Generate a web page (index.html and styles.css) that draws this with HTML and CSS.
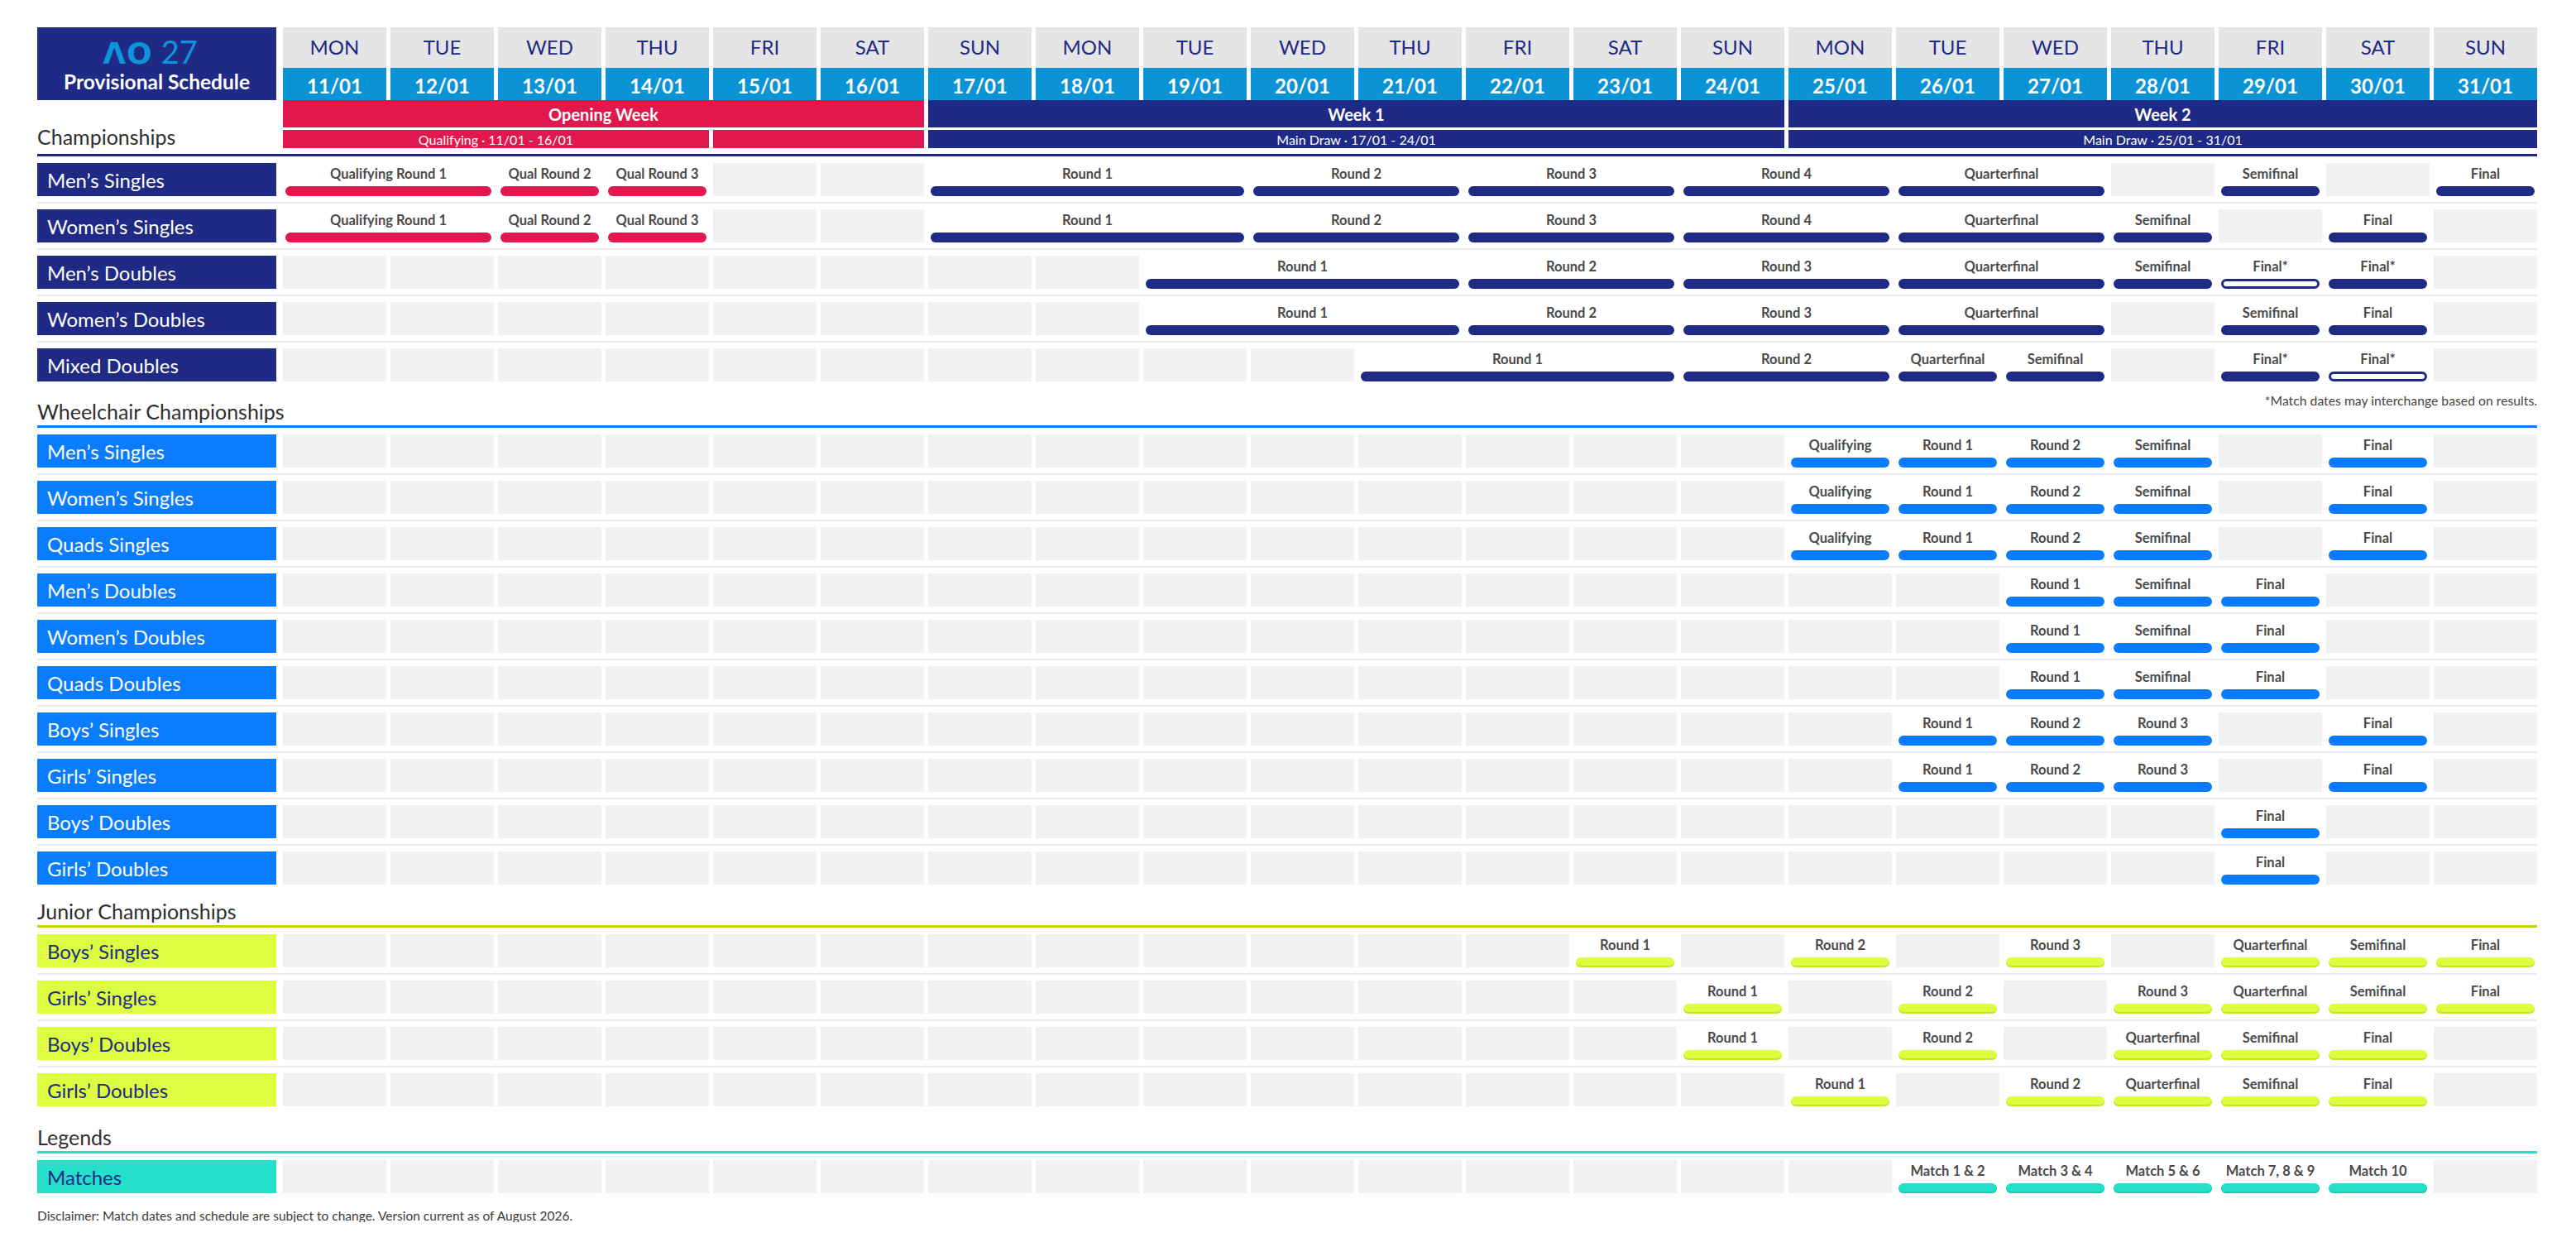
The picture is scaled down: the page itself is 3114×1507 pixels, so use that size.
FILE: index.html
```html
<!DOCTYPE html>
<html lang="en">
<head>
<meta charset="utf-8">
<title>AO 27 Provisional Schedule</title>
<link rel="stylesheet" href="styles.css">
</head>
<body>
<div class="page">

  <div class="top">
    <div class="logo">
      <div class="brand"><span class="ao"><span class="lam">Λ</span>O</span><span class="yr">27</span></div>
      <div class="ptitle">Provisional Schedule</div>
    </div>
    <div class="grid days">
      <div class="day"><div class="dname">MON</div><div class="ddate">11/01</div></div>
      <div class="day"><div class="dname">TUE</div><div class="ddate">12/01</div></div>
      <div class="day"><div class="dname">WED</div><div class="ddate">13/01</div></div>
      <div class="day"><div class="dname">THU</div><div class="ddate">14/01</div></div>
      <div class="day"><div class="dname">FRI</div><div class="ddate">15/01</div></div>
      <div class="day"><div class="dname">SAT</div><div class="ddate">16/01</div></div>
      <div class="day"><div class="dname">SUN</div><div class="ddate">17/01</div></div>
      <div class="day"><div class="dname">MON</div><div class="ddate">18/01</div></div>
      <div class="day"><div class="dname">TUE</div><div class="ddate">19/01</div></div>
      <div class="day"><div class="dname">WED</div><div class="ddate">20/01</div></div>
      <div class="day"><div class="dname">THU</div><div class="ddate">21/01</div></div>
      <div class="day"><div class="dname">FRI</div><div class="ddate">22/01</div></div>
      <div class="day"><div class="dname">SAT</div><div class="ddate">23/01</div></div>
      <div class="day"><div class="dname">SUN</div><div class="ddate">24/01</div></div>
      <div class="day"><div class="dname">MON</div><div class="ddate">25/01</div></div>
      <div class="day"><div class="dname">TUE</div><div class="ddate">26/01</div></div>
      <div class="day"><div class="dname">WED</div><div class="ddate">27/01</div></div>
      <div class="day"><div class="dname">THU</div><div class="ddate">28/01</div></div>
      <div class="day"><div class="dname">FRI</div><div class="ddate">29/01</div></div>
      <div class="day"><div class="dname">SAT</div><div class="ddate">30/01</div></div>
      <div class="day"><div class="dname">SUN</div><div class="ddate">31/01</div></div>
    </div>
  </div>

  <div class="weeks-row">
    <h2 class="sec-title champ-title">Championships</h2>
    <div class="grid weeks">
      <div class="wk red s6">Opening Week</div>
      <div class="wk navy s8">Week 1</div>
      <div class="wk navy s7">Week 2</div>
      <div class="sub red s4">Qualifying · 11/01 - 16/01</div>
      <div class="sub red s2"></div>
      <div class="sub navy s8">Main Draw · 17/01 - 24/01</div>
      <div class="sub navy s7">Main Draw · 25/01 - 31/01</div>
    </div>
  </div>
  <div class="rule rule-navy champ-rule"></div>

  <section class="rows">
    <div class="row">
      <div class="label lb-navy">Men’s Singles</div>
      <div class="grid cells">
        <div class="ev s2"><span>Qualifying Round 1</span><i class="q"></i></div>
        <div class="ev"><span>Qual Round 2</span><i class="q"></i></div>
        <div class="ev"><span>Qual Round 3</span><i class="q"></i></div>
        <div class="e"></div><div class="e"></div>
        <div class="ev s3"><span>Round 1</span><i></i></div>
        <div class="ev s2"><span>Round 2</span><i></i></div>
        <div class="ev s2"><span>Round 3</span><i></i></div>
        <div class="ev s2"><span>Round 4</span><i></i></div>
        <div class="ev s2"><span>Quarterfinal</span><i></i></div>
        <div class="e"></div>
        <div class="ev"><span>Semifinal</span><i></i></div>
        <div class="e"></div>
        <div class="ev"><span>Final</span><i></i></div>
      </div>
    </div>
    <div class="row">
      <div class="label lb-navy">Women’s Singles</div>
      <div class="grid cells">
        <div class="ev s2"><span>Qualifying Round 1</span><i class="q"></i></div>
        <div class="ev"><span>Qual Round 2</span><i class="q"></i></div>
        <div class="ev"><span>Qual Round 3</span><i class="q"></i></div>
        <div class="e"></div><div class="e"></div>
        <div class="ev s3"><span>Round 1</span><i></i></div>
        <div class="ev s2"><span>Round 2</span><i></i></div>
        <div class="ev s2"><span>Round 3</span><i></i></div>
        <div class="ev s2"><span>Round 4</span><i></i></div>
        <div class="ev s2"><span>Quarterfinal</span><i></i></div>
        <div class="ev"><span>Semifinal</span><i></i></div>
        <div class="e"></div>
        <div class="ev"><span>Final</span><i></i></div>
        <div class="e"></div>
      </div>
    </div>
    <div class="row">
      <div class="label lb-navy">Men’s Doubles</div>
      <div class="grid cells">
        <div class="e"></div><div class="e"></div><div class="e"></div><div class="e"></div>
        <div class="e"></div><div class="e"></div><div class="e"></div><div class="e"></div>
        <div class="ev s3"><span>Round 1</span><i></i></div>
        <div class="ev s2"><span>Round 2</span><i></i></div>
        <div class="ev s2"><span>Round 3</span><i></i></div>
        <div class="ev s2"><span>Quarterfinal</span><i></i></div>
        <div class="ev"><span>Semifinal</span><i></i></div>
        <div class="ev"><span>Final*</span><i class="ol"></i></div>
        <div class="ev"><span>Final*</span><i></i></div>
        <div class="e"></div>
      </div>
    </div>
    <div class="row">
      <div class="label lb-navy">Women’s Doubles</div>
      <div class="grid cells">
        <div class="e"></div><div class="e"></div><div class="e"></div><div class="e"></div>
        <div class="e"></div><div class="e"></div><div class="e"></div><div class="e"></div>
        <div class="ev s3"><span>Round 1</span><i></i></div>
        <div class="ev s2"><span>Round 2</span><i></i></div>
        <div class="ev s2"><span>Round 3</span><i></i></div>
        <div class="ev s2"><span>Quarterfinal</span><i></i></div>
        <div class="e"></div>
        <div class="ev"><span>Semifinal</span><i></i></div>
        <div class="ev"><span>Final</span><i></i></div>
        <div class="e"></div>
      </div>
    </div>
    <div class="row">
      <div class="label lb-navy">Mixed Doubles</div>
      <div class="grid cells">
        <div class="e"></div><div class="e"></div><div class="e"></div><div class="e"></div><div class="e"></div>
        <div class="e"></div><div class="e"></div><div class="e"></div><div class="e"></div><div class="e"></div>
        <div class="ev s3"><span>Round 1</span><i></i></div>
        <div class="ev s2"><span>Round 2</span><i></i></div>
        <div class="ev"><span>Quarterfinal</span><i></i></div>
        <div class="ev"><span>Semifinal</span><i></i></div>
        <div class="e"></div>
        <div class="ev"><span>Final*</span><i></i></div>
        <div class="ev"><span>Final*</span><i class="ol"></i></div>
        <div class="e"></div>
      </div>
    </div>
  </section>

  <section class="sec sec-wc">
    <div class="sec-head">
      <h2 class="sec-title">Wheelchair Championships</h2>
      <p class="note">*Match dates may interchange based on results.</p>
    </div>
    <div class="rule rule-blue"></div>
    <div class="rows">
      <div class="row">
        <div class="label lb-blue">Men’s Singles</div>
        <div class="grid cells">
          <div class="e"></div><div class="e"></div><div class="e"></div><div class="e"></div><div class="e"></div><div class="e"></div><div class="e"></div>
          <div class="e"></div><div class="e"></div><div class="e"></div><div class="e"></div><div class="e"></div><div class="e"></div><div class="e"></div>
          <div class="ev"><span>Qualifying</span><i class="wc"></i></div>
          <div class="ev"><span>Round 1</span><i class="wc"></i></div>
          <div class="ev"><span>Round 2</span><i class="wc"></i></div>
          <div class="ev"><span>Semifinal</span><i class="wc"></i></div>
          <div class="e"></div>
          <div class="ev"><span>Final</span><i class="wc"></i></div>
          <div class="e"></div>
        </div>
      </div>
      <div class="row">
        <div class="label lb-blue">Women’s Singles</div>
        <div class="grid cells">
          <div class="e"></div><div class="e"></div><div class="e"></div><div class="e"></div><div class="e"></div><div class="e"></div><div class="e"></div>
          <div class="e"></div><div class="e"></div><div class="e"></div><div class="e"></div><div class="e"></div><div class="e"></div><div class="e"></div>
          <div class="ev"><span>Qualifying</span><i class="wc"></i></div>
          <div class="ev"><span>Round 1</span><i class="wc"></i></div>
          <div class="ev"><span>Round 2</span><i class="wc"></i></div>
          <div class="ev"><span>Semifinal</span><i class="wc"></i></div>
          <div class="e"></div>
          <div class="ev"><span>Final</span><i class="wc"></i></div>
          <div class="e"></div>
        </div>
      </div>
      <div class="row">
        <div class="label lb-blue">Quads Singles</div>
        <div class="grid cells">
          <div class="e"></div><div class="e"></div><div class="e"></div><div class="e"></div><div class="e"></div><div class="e"></div><div class="e"></div>
          <div class="e"></div><div class="e"></div><div class="e"></div><div class="e"></div><div class="e"></div><div class="e"></div><div class="e"></div>
          <div class="ev"><span>Qualifying</span><i class="wc"></i></div>
          <div class="ev"><span>Round 1</span><i class="wc"></i></div>
          <div class="ev"><span>Round 2</span><i class="wc"></i></div>
          <div class="ev"><span>Semifinal</span><i class="wc"></i></div>
          <div class="e"></div>
          <div class="ev"><span>Final</span><i class="wc"></i></div>
          <div class="e"></div>
        </div>
      </div>
      <div class="row">
        <div class="label lb-blue">Men’s Doubles</div>
        <div class="grid cells">
          <div class="e"></div><div class="e"></div><div class="e"></div><div class="e"></div><div class="e"></div><div class="e"></div><div class="e"></div><div class="e"></div>
          <div class="e"></div><div class="e"></div><div class="e"></div><div class="e"></div><div class="e"></div><div class="e"></div><div class="e"></div><div class="e"></div>
          <div class="ev"><span>Round 1</span><i class="wc"></i></div>
          <div class="ev"><span>Semifinal</span><i class="wc"></i></div>
          <div class="ev"><span>Final</span><i class="wc"></i></div>
          <div class="e"></div><div class="e"></div>
        </div>
      </div>
      <div class="row">
        <div class="label lb-blue">Women’s Doubles</div>
        <div class="grid cells">
          <div class="e"></div><div class="e"></div><div class="e"></div><div class="e"></div><div class="e"></div><div class="e"></div><div class="e"></div><div class="e"></div>
          <div class="e"></div><div class="e"></div><div class="e"></div><div class="e"></div><div class="e"></div><div class="e"></div><div class="e"></div><div class="e"></div>
          <div class="ev"><span>Round 1</span><i class="wc"></i></div>
          <div class="ev"><span>Semifinal</span><i class="wc"></i></div>
          <div class="ev"><span>Final</span><i class="wc"></i></div>
          <div class="e"></div><div class="e"></div>
        </div>
      </div>
      <div class="row">
        <div class="label lb-blue">Quads Doubles</div>
        <div class="grid cells">
          <div class="e"></div><div class="e"></div><div class="e"></div><div class="e"></div><div class="e"></div><div class="e"></div><div class="e"></div><div class="e"></div>
          <div class="e"></div><div class="e"></div><div class="e"></div><div class="e"></div><div class="e"></div><div class="e"></div><div class="e"></div><div class="e"></div>
          <div class="ev"><span>Round 1</span><i class="wc"></i></div>
          <div class="ev"><span>Semifinal</span><i class="wc"></i></div>
          <div class="ev"><span>Final</span><i class="wc"></i></div>
          <div class="e"></div><div class="e"></div>
        </div>
      </div>
      <div class="row">
        <div class="label lb-blue">Boys’ Singles</div>
        <div class="grid cells">
          <div class="e"></div><div class="e"></div><div class="e"></div><div class="e"></div><div class="e"></div><div class="e"></div><div class="e"></div><div class="e"></div>
          <div class="e"></div><div class="e"></div><div class="e"></div><div class="e"></div><div class="e"></div><div class="e"></div><div class="e"></div>
          <div class="ev"><span>Round 1</span><i class="wc"></i></div>
          <div class="ev"><span>Round 2</span><i class="wc"></i></div>
          <div class="ev"><span>Round 3</span><i class="wc"></i></div>
          <div class="e"></div>
          <div class="ev"><span>Final</span><i class="wc"></i></div>
          <div class="e"></div>
        </div>
      </div>
      <div class="row">
        <div class="label lb-blue">Girls’ Singles</div>
        <div class="grid cells">
          <div class="e"></div><div class="e"></div><div class="e"></div><div class="e"></div><div class="e"></div><div class="e"></div><div class="e"></div><div class="e"></div>
          <div class="e"></div><div class="e"></div><div class="e"></div><div class="e"></div><div class="e"></div><div class="e"></div><div class="e"></div>
          <div class="ev"><span>Round 1</span><i class="wc"></i></div>
          <div class="ev"><span>Round 2</span><i class="wc"></i></div>
          <div class="ev"><span>Round 3</span><i class="wc"></i></div>
          <div class="e"></div>
          <div class="ev"><span>Final</span><i class="wc"></i></div>
          <div class="e"></div>
        </div>
      </div>
      <div class="row">
        <div class="label lb-blue">Boys’ Doubles</div>
        <div class="grid cells">
          <div class="e"></div><div class="e"></div><div class="e"></div><div class="e"></div><div class="e"></div><div class="e"></div><div class="e"></div><div class="e"></div><div class="e"></div>
          <div class="e"></div><div class="e"></div><div class="e"></div><div class="e"></div><div class="e"></div><div class="e"></div><div class="e"></div><div class="e"></div><div class="e"></div>
          <div class="ev"><span>Final</span><i class="wc"></i></div>
          <div class="e"></div><div class="e"></div>
        </div>
      </div>
      <div class="row">
        <div class="label lb-blue">Girls’ Doubles</div>
        <div class="grid cells">
          <div class="e"></div><div class="e"></div><div class="e"></div><div class="e"></div><div class="e"></div><div class="e"></div><div class="e"></div><div class="e"></div><div class="e"></div>
          <div class="e"></div><div class="e"></div><div class="e"></div><div class="e"></div><div class="e"></div><div class="e"></div><div class="e"></div><div class="e"></div><div class="e"></div>
          <div class="ev"><span>Final</span><i class="wc"></i></div>
          <div class="e"></div><div class="e"></div>
        </div>
      </div>
    </div>
  </section>

  <section class="sec sec-jr">
    <div class="sec-head">
      <h2 class="sec-title">Junior Championships</h2>
    </div>
    <div class="rule rule-lime"></div>
    <div class="rows">
      <div class="row">
        <div class="label lb-lime">Boys’ Singles</div>
        <div class="grid cells">
          <div class="e"></div><div class="e"></div><div class="e"></div><div class="e"></div><div class="e"></div><div class="e"></div>
          <div class="e"></div><div class="e"></div><div class="e"></div><div class="e"></div><div class="e"></div><div class="e"></div>
          <div class="ev"><span>Round 1</span><i class="jr"></i></div>
          <div class="e"></div>
          <div class="ev"><span>Round 2</span><i class="jr"></i></div>
          <div class="e"></div>
          <div class="ev"><span>Round 3</span><i class="jr"></i></div>
          <div class="e"></div>
          <div class="ev"><span>Quarterfinal</span><i class="jr"></i></div>
          <div class="ev"><span>Semifinal</span><i class="jr"></i></div>
          <div class="ev"><span>Final</span><i class="jr"></i></div>
        </div>
      </div>
      <div class="row">
        <div class="label lb-lime">Girls’ Singles</div>
        <div class="grid cells">
          <div class="e"></div><div class="e"></div><div class="e"></div><div class="e"></div><div class="e"></div><div class="e"></div><div class="e"></div>
          <div class="e"></div><div class="e"></div><div class="e"></div><div class="e"></div><div class="e"></div><div class="e"></div>
          <div class="ev"><span>Round 1</span><i class="jr"></i></div>
          <div class="e"></div>
          <div class="ev"><span>Round 2</span><i class="jr"></i></div>
          <div class="e"></div>
          <div class="ev"><span>Round 3</span><i class="jr"></i></div>
          <div class="ev"><span>Quarterfinal</span><i class="jr"></i></div>
          <div class="ev"><span>Semifinal</span><i class="jr"></i></div>
          <div class="ev"><span>Final</span><i class="jr"></i></div>
        </div>
      </div>
      <div class="row">
        <div class="label lb-lime">Boys’ Doubles</div>
        <div class="grid cells">
          <div class="e"></div><div class="e"></div><div class="e"></div><div class="e"></div><div class="e"></div><div class="e"></div><div class="e"></div>
          <div class="e"></div><div class="e"></div><div class="e"></div><div class="e"></div><div class="e"></div><div class="e"></div>
          <div class="ev"><span>Round 1</span><i class="jr"></i></div>
          <div class="e"></div>
          <div class="ev"><span>Round 2</span><i class="jr"></i></div>
          <div class="e"></div>
          <div class="ev"><span>Quarterfinal</span><i class="jr"></i></div>
          <div class="ev"><span>Semifinal</span><i class="jr"></i></div>
          <div class="ev"><span>Final</span><i class="jr"></i></div>
          <div class="e"></div>
        </div>
      </div>
      <div class="row">
        <div class="label lb-lime">Girls’ Doubles</div>
        <div class="grid cells">
          <div class="e"></div><div class="e"></div><div class="e"></div><div class="e"></div><div class="e"></div><div class="e"></div><div class="e"></div>
          <div class="e"></div><div class="e"></div><div class="e"></div><div class="e"></div><div class="e"></div><div class="e"></div><div class="e"></div>
          <div class="ev"><span>Round 1</span><i class="jr"></i></div>
          <div class="e"></div>
          <div class="ev"><span>Round 2</span><i class="jr"></i></div>
          <div class="ev"><span>Quarterfinal</span><i class="jr"></i></div>
          <div class="ev"><span>Semifinal</span><i class="jr"></i></div>
          <div class="ev"><span>Final</span><i class="jr"></i></div>
          <div class="e"></div>
        </div>
      </div>
    </div>
  </section>

  <section class="sec sec-lg">
    <div class="sec-head">
      <h2 class="sec-title">Legends</h2>
    </div>
    <div class="rule rule-teal"></div>
    <div class="rows">
      <div class="row">
        <div class="label lb-teal">Matches</div>
        <div class="grid cells">
          <div class="e"></div><div class="e"></div><div class="e"></div><div class="e"></div><div class="e"></div>
          <div class="e"></div><div class="e"></div><div class="e"></div><div class="e"></div><div class="e"></div>
          <div class="e"></div><div class="e"></div><div class="e"></div><div class="e"></div><div class="e"></div>
          <div class="ev"><span>Match 1 &amp; 2</span><i class="lg"></i></div>
          <div class="ev"><span>Match 3 &amp; 4</span><i class="lg"></i></div>
          <div class="ev"><span>Match 5 &amp; 6</span><i class="lg"></i></div>
          <div class="ev"><span>Match 7, 8 &amp; 9</span><i class="lg"></i></div>
          <div class="ev"><span>Match 10</span><i class="lg"></i></div>
          <div class="e"></div>
        </div>
      </div>
    </div>
  </section>

  <p class="disclaimer">Disclaimer: Match dates and schedule are subject to change. Version current as of August 2026.</p>
</div>
</body>
</html>
```

FILE: styles.css
```css
* {
  box-sizing: border-box;
  margin: 0;
  padding: 0;
}

body {
  margin: 0;
  background: #ffffff;
  font-family: Lato, "Liberation Sans", sans-serif;
  color: #474747;
}

.page {
  width: 3114px;
  padding: 33px 0 0 45px;
}

/* shared 21-day grid */
.grid {
  display: grid;
  grid-template-columns: repeat(21, 125px);
  column-gap: 5px;
}

.s2 { grid-column: span 2; }
.s3 { grid-column: span 3; }
.s4 { grid-column: span 4; }
.s6 { grid-column: span 6; }
.s7 { grid-column: span 7; }
.s8 { grid-column: span 8; }

/* header */
.top {
  display: flex;
  gap: 8px;
}

.logo {
  width: 289px;
  height: 88px;
  background: #1f2a87;
  display: flex;
  flex-direction: column;
  align-items: center;
  justify-content: flex-start;
  padding-top: 7px;
}

.brand {
  display: flex;
  align-items: baseline;
  gap: 10px;
  height: 44px;
  line-height: 44px;
  color: #0d95da;
  margin-right: 16px;
}

.ao {
  font-family: "DejaVu Sans", Lato, sans-serif;
  font-weight: 700;
  font-size: 36px;
  letter-spacing: 1px;
}

.yr {
  font-family: Lato, "Liberation Sans", sans-serif;
  font-weight: 400;
  font-size: 38px;
}

.ptitle {
  color: #ffffff;
  font-weight: 700;
  font-size: 24.5px;
  line-height: 28px;
  margin-top: 1px;
}

.day {
  display: flex;
  flex-direction: column;
}

.dname {
  height: 49px;
  background: #e5e5e5;
  color: #1f2a87;
  font-size: 24px;
  display: flex;
  align-items: center;
  justify-content: center;
  padding-bottom: 3px;
}

.ddate {
  height: 39px;
  background: #0a93d5;
  color: #ffffff;
  font-size: 24px;
  font-weight: 700;
  display: flex;
  align-items: center;
  justify-content: center;
  padding-top: 3px;
}

.weeks-row {
  display: flex;
  gap: 8px;
}

.champ-title {
  width: 289px;
  flex: none;
  align-self: flex-end;
}

.weeks {
  grid-template-rows: 33px 22px;
  row-gap: 3px;
}

.wk {
  color: #ffffff;
  font-weight: 700;
  font-size: 20px;
  display: flex;
  align-items: center;
  justify-content: center;
}

.sub {
  color: #ffffff;
  font-size: 16px;
  display: flex;
  align-items: center;
  justify-content: center;
}

.red { background: #e0184d; }
.navy { background: #1f2a87; }

/* section titles and rules */
.sec-title {
  font-size: 25px;
  font-weight: 400;
  line-height: 28px;
  color: #2e2e2e;
}

.sec-head {
  width: 3022px;
  display: flex;
  justify-content: space-between;
  align-items: flex-start;
  margin-bottom: 3px;
}

.note {
  font-size: 15.75px;
  line-height: 16px;
  color: #444444;
  margin-top: -7px;
}

.rule {
  width: 3022px;
  height: 3px;
}

.champ-rule { margin-top: 7px; }
.rule-navy { background: #1f2a87; }
.rule-blue { background: #0a7cff; }
.rule-lime { background: #c7d400; }
.rule-teal { background: #24dfc9; }

.sec-wc { margin-top: 22px; }
.sec-jr { margin-top: 18px; }
.sec-lg { margin-top: 23px; }

.rows {
  margin-top: 8px;
}

/* schedule rows */
.row {
  display: flex;
  gap: 8px;
  width: 3022px;
}

.row + .row {
  margin-top: 7px;
  padding-top: 7px;
  border-top: 2px solid #e8e8e8;
}

.label {
  width: 289px;
  height: 40px;
  flex: none;
  display: flex;
  align-items: center;
  padding-left: 12px;
  font-size: 24px;
}

.lb-navy { background: #1f2a87; color: #ffffff; }
.lb-blue { background: #0a7cff; color: #ffffff; }
.lb-lime { background: #ddfd41; color: #1f2a87; }
.lb-teal { background: #24dfc9; color: #1f2a87; }

.cells {
  height: 40px;
}

.e {
  background: #f1f1f1;
}

.ev {
  display: flex;
  flex-direction: column;
}

.ev span {
  display: block;
  height: 27px;
  line-height: 27px;
  text-align: center;
  font-size: 16.5px;
  font-weight: 700;
  color: #4a4a4a;
  white-space: nowrap;
}

.ev i {
  display: block;
  margin: auto 3px 0;
  height: 12px;
  border-radius: 6px;
  background: #1f2a87;
}

.ev i.q { background: #e0184d; }
.ev i.wc { background: #0a7cff; }
.ev i.jr { background: #ddfd41; box-shadow: inset 0 -2px 0 #c9e22c; }
.ev i.lg { background: #24dfc9; box-shadow: inset 0 -2px 0 #1cc9b3; }
.ev i.ol { background: #ffffff; border: 3px solid #1f2a87; }

.disclaimer {
  margin-top: 19px;
  font-size: 15.5px;
  line-height: 16px;
  color: #3a3a3a;
}
```
